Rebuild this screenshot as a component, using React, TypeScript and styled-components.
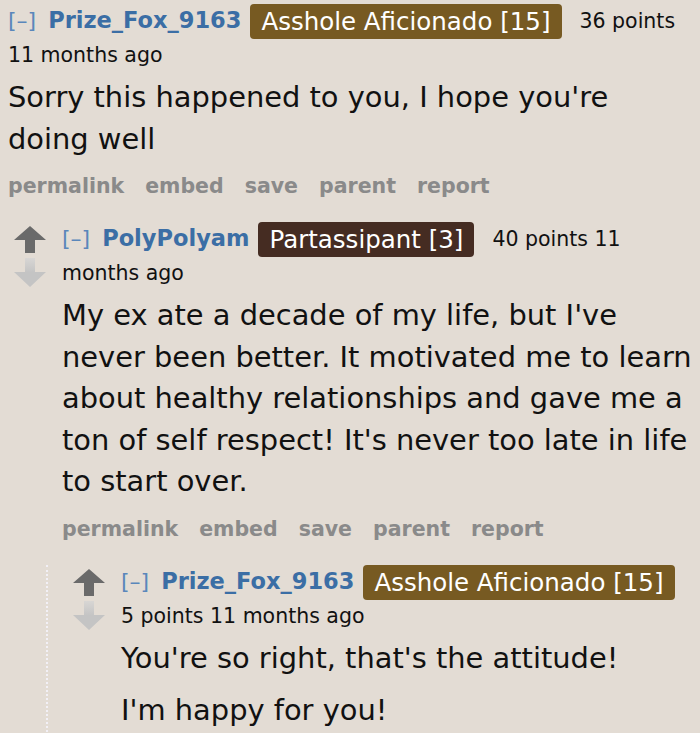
import React from 'react'
import styled, { createGlobalStyle } from 'styled-components'

const GlobalStyle = createGlobalStyle`
    html, body {
        margin: 0;
        padding: 0;
        background: #e3dcd4;
    }
    body {
        font-family: "DejaVu Sans", Verdana, sans-serif;
        color: #111;
    }
`

// ============================================================================
// STYLED COMPONENTS
// ============================================================================

const Page = styled.div`
    padding: 4px 6px 0 8px;
    overflow: hidden;
    height: 733px;
    box-sizing: border-box;
`

const CommentRow = styled.div`
    display: flex;
    align-items: flex-start;
`

const MidCol = styled.div`
    width: 32px;
    margin: 4px 16px 0 6px;
    display: flex;
    flex-direction: column;
    align-items: center;
    gap: 5px;
    flex-shrink: 0;
`

const Entry = styled.div`
    flex: 1;
    min-width: 0;
`

const Tagline = styled.p`
    margin: 0;
    font-size: 20.5px;
    line-height: 32px;
`

const Expand = styled.span`
    color: #5a87bb;
    font-size: 22px;
    margin-right: 12px;
`

const Author = styled.span`
    color: #3b6ea5;
    font-weight: bold;
    font-size: 22.5px;
    margin-right: 9px;
`

const Flair = styled.span<{ $bg: string }>`
    display: inline-block;
    background: ${({ $bg }) => $bg};
    color: #fff;
    font-size: 24.5px;
    line-height: 35px;
    padding: 0 11px;
    border-radius: 4px;
    margin-right: 18px;
    vertical-align: top;
`

const Body = styled.div`
    margin-top: 6px;
    font-size: 28.9px;
    line-height: 41.5px;

    p {
        margin: 0;
    }
    p + p {
        margin-top: 11px;
    }
`

const Buttons = styled.ul`
    list-style: none;
    margin: 15px 0 0;
    padding: 0;
    display: flex;
    gap: 21px;
    font-size: 20.5px;
    line-height: 22px;
    font-weight: bold;
    color: #8a8a8a;
`

const Replies = styled.div<{ $nested?: boolean }>`
    margin-top: 25px;
    ${({ $nested }) =>
        $nested &&
        `
        margin-left: 38px;
        border-left: 2px dotted #f2f0f6;
        padding-left: 19px;
    `}
`

// ============================================================================
// COMPONENTS
// ============================================================================

const UpArrow = () => (
    <svg width="32" height="27" viewBox="0 0 32 27">
        <path d="M16 0 L32 14 L21 14 L21 27 L11 27 L11 14 L0 14 Z" fill="#6a6a6a" />
    </svg>
)

const DownArrow = () => (
    <svg width="32" height="29" viewBox="0 0 32 29">
        <defs>
            <linearGradient id="downFade" x1="0" y1="0" x2="0" y2="1">
                <stop offset="0" stopColor="#d8d6d4" />
                <stop offset="0.5" stopColor="#c4c4c4" />
                <stop offset="1" stopColor="#c4c4c4" />
            </linearGradient>
        </defs>
        <path d="M11 0 L21 0 L21 14 L32 14 L16 29 L0 14 L11 14 Z" fill="url(#downFade)" />
    </svg>
)

interface CommentProps {
    author: string
    flair: string
    flairColor: string
    meta: string
    paragraphs: string[]
    showArrows?: boolean
    showButtons?: boolean
    children?: React.ReactNode
}

const Comment: React.FC<CommentProps> = ({
    author,
    flair,
    flairColor,
    meta,
    paragraphs,
    showArrows = true,
    showButtons = true,
    children,
}) => (
    <>
        <CommentRow>
            {showArrows && (
                <MidCol>
                    <UpArrow />
                    <DownArrow />
                </MidCol>
            )}
            <Entry>
                <Tagline>
                    <Expand>[–]</Expand>
                    <Author>{author}</Author>
                    <Flair $bg={flairColor}>{flair}</Flair>
                    {meta}
                </Tagline>
                <Body>
                    {paragraphs.map((p, i) => (
                        <p key={i}>{p}</p>
                    ))}
                </Body>
                {showButtons && (
                    <Buttons>
                        <li>permalink</li>
                        <li>embed</li>
                        <li>save</li>
                        <li>parent</li>
                        <li>report</li>
                    </Buttons>
                )}
            </Entry>
        </CommentRow>
        {children}
    </>
)

const App: React.FC = () => (
    <Page>
        <GlobalStyle />
        <Comment
            author="Prize_Fox_9163"
            flair="Asshole Aficionado [15]"
            flairColor="#775a22"
            meta="36 points 11 months ago"
            paragraphs={["Sorry this happened to you, I hope you're doing well"]}
            showArrows={false}
        />
        <Replies>
            <Comment
                author="PolyPolyam"
                flair="Partassipant [3]"
                flairColor="#452c22"
                meta="40 points 11 months ago"
                paragraphs={[
                    "My ex ate a decade of my life, but I've never been better. It motivated me to learn about healthy relationships and gave me a ton of self respect! It's never too late in life to start over.",
                ]}
            >
                <Replies $nested>
                    <Comment
                        author="Prize_Fox_9163"
                        flair="Asshole Aficionado [15]"
                        flairColor="#775a22"
                        meta="5 points 11 months ago"
                        paragraphs={["You're so right, that's the attitude!", "I'm happy for you!"]}
                        showButtons={false}
                    />
                </Replies>
            </Comment>
        </Replies>
    </Page>
)

export default App
